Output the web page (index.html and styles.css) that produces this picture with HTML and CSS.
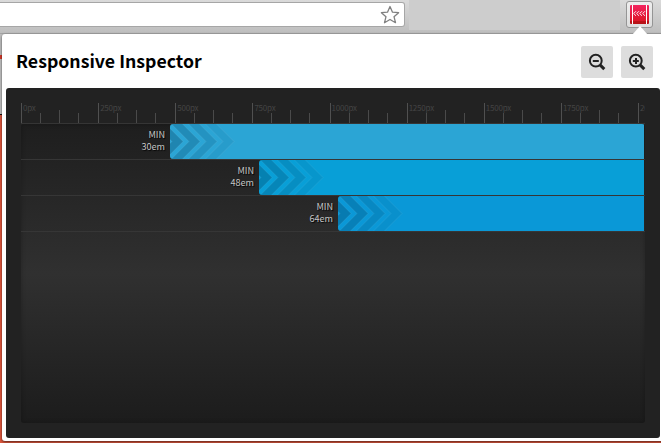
FILE: index.html
```html
<!DOCTYPE html>
<html lang="en">
<head>
<meta charset="utf-8">
<title>Responsive Inspector</title>
<link rel="stylesheet" href="styles.css">
</head>
<body>
<div class="page"></div>
<header class="toolbar">
  <div class="address">
    <svg width="20" height="20" viewBox="0 0 20 20"><path d="M10 1.500l2.500 5.700 6.100.5-4.600 4 1.500 6L10 14.500l-5.500 3.200 1.500-6L1.400 7.700l6.100-.5z" fill="#fff" stroke="#808080" stroke-width="1.300" stroke-linejoin="round"/></svg>
  </div>
  <div class="blank"></div>
  <div class="extension">
    <svg width="19" height="19" viewBox="0 0 19 19">
      <defs><linearGradient id="red" x2="0" y2="1"><stop offset="0" stop-color="#f3245f"/><stop offset=".85" stop-color="#dc1728"/><stop offset=".87" stop-color="#b91217"/></linearGradient></defs>
      <rect width="19" height="19" rx="1" fill="url(#red)"/>
      <path d="M2.500 0v19M16.500 0v19" stroke="#fff"/>
      <path d="M6 6.200l-2.300 2.300 2.300 2.300M9 6.200l-2.300 2.300 2.300 2.300M12 6.200l-2.300 2.300 2.300 2.300M15 6.200l-2.300 2.300 2.300 2.300" fill="none" stroke="#fff" stroke-width=".9"/>
    </svg>
  </div>
</header>
<main class="popup">
  <svg class="arrow" width="16" height="9" viewBox="0 0 16 9"><path d="M0 9L8 0l8 9z" fill="#fff"/></svg>
  <div class="heading">
    <h1>Responsive Inspector</h1>
    <button class="zoom"><svg width="18" height="18" viewBox="0 0 18 18" fill="none" stroke="#222"><circle cx="7.800" cy="7.700" r="5.900" stroke-width="2"/><path d="M4.800 8h6" stroke-width="2"/><path d="M12 11.900l4.300 4.200" stroke-width="3"/></svg></button>
    <button class="zoom"><svg width="18" height="18" viewBox="0 0 18 18" fill="none" stroke="#222"><circle cx="7.800" cy="7.700" r="5.900" stroke-width="2"/><path d="M4.800 8h6M8 5v6" stroke-width="2"/><path d="M12 11.900l4.300 4.200" stroke-width="3"/></svg></button>
  </div>
  <section class="inspector">
    <div class="ruler">
      <div class="unit"><span>0px</span><i></i><i class="half"></i><i></i></div>
      <div class="unit"><span>250px</span><i></i><i class="half"></i><i></i></div>
      <div class="unit"><span>500px</span><i></i><i class="half"></i><i></i></div>
      <div class="unit"><span>750px</span><i></i><i class="half"></i><i></i></div>
      <div class="unit"><span>1000px</span><i></i><i class="half"></i><i></i></div>
      <div class="unit"><span>1250px</span><i></i><i class="half"></i><i></i></div>
      <div class="unit"><span>1500px</span><i></i><i class="half"></i><i></i></div>
      <div class="unit"><span>1750px</span><i></i><i class="half"></i><i></i></div>
      <div class="unit"><span>2000px</span></div>
    </div>
    <div class="queries">
      <div class="row"><div class="label em30"><div>MIN</div><div>30em</div></div><div class="bar light"><svg width="66" height="35"><use href="#chevrons"/></svg></div></div>
      <div class="row"><div class="label em48"><div>MIN</div><div>48em</div></div><div class="bar mid"><svg width="66" height="35"><use href="#chevrons"/></svg></div></div>
      <div class="row"><div class="label em64"><div>MIN</div><div>64em</div></div><div class="bar deep"><svg width="66" height="35"><use href="#chevrons"/></svg></div></div>
    </div>
  </section>
</main>
<svg class="defs" width="0" height="0">
  <g id="chevrons" fill="#002b45" stroke="#fff" stroke-opacity=".1" stroke-width=".8">
    <path d="M-16.500 -1H-5.500L13 17.500L-5.500 36H-16.500L2 17.500z" fill-opacity=".26"/>
    <path d="M0.500 -1H11.500L30 17.500L11.500 36H0.500L19 17.500z" fill-opacity=".21"/>
    <path d="M17.500 -1H28.500L47 17.500L28.500 36H17.500L36 17.500z" fill-opacity=".14"/>
    <path d="M34.500 -1H45.500L64 17.500L45.500 36H34.500L53 17.500z" fill-opacity=".07"/>
  </g>
</svg>
</body>
</html>
```
FILE: styles.css
```css
* { box-sizing: border-box; }
body { margin: 0; height: 443px; position: relative; overflow: hidden; background: #c1c1c1; font-family: "Noto Sans CJK SC", "Noto Sans", sans-serif; }
.page { position: absolute; left: 0; top: 55px; width: 661px; height: 388px; background: linear-gradient(#d83a2a 0 4px, #c4c4c4 4px 59px, #111 59px 60px, #e2593f 60px); }
.toolbar { height: 34px; display: flex; align-items: flex-start; background: linear-gradient(#dadada, #bebebe); border-bottom: 1px solid #a5a5a5; }
.address { width: 405px; height: 25px; margin-top: 2px; display: flex; justify-content: flex-end; padding: 2px 4px 0 0; background: #fff; border: 1px solid #a6a6a6; border-left: 0; border-radius: 0 3px 3px 0; }
.blank { width: 211px; height: 30px; margin-left: 4px; background: #cdcdcd; }
.extension { width: 27px; height: 27px; margin: 1px 0 0 6px; padding: 3px; display: flex; background: linear-gradient(#eee, #ddd); border: 1px solid #959595; border-radius: 3px; }
.popup { position: relative; width: 661px; height: 407px; margin-left: 2px; padding: 12px 0 0 4px; background: #fff; border-radius: 3px 0 0 3px; box-shadow: 0 1px 3px rgba(0,0,0,.65); }
.arrow { position: absolute; left: 630px; top: -8px; }
.heading { display: flex; width: 647px; height: 42px; gap: 8px; padding-left: 10px; }
h1 { flex: 1; margin: 0; font-size: 17.7px; line-height: 29px; font-weight: 700; color: #000; }
.zoom { width: 32px; height: 32px; border: 0; border-radius: 2px; background: #ddd; padding: 0; display: flex; align-items: center; justify-content: center; }
.inspector { width: 654px; height: 350px; padding: 15px 15px 0; background: #222; border-radius: 3px; }
.ruler { height: 21px; width: 624px; display: flex; overflow: hidden; border-bottom: 1px solid #353535; }
.unit { flex: 0 0 77.125px; height: 20px; display: grid; grid-template-columns: repeat(3, 19px); align-items: end; border-left: 1px solid #505050; position: relative; }
.unit i { height: 10px; border-right: 1px solid #4a4a4a; }
.unit .half { height: 13px; }
.unit span { position: absolute; left: 1px; top: 0; font-size: 8px; line-height: 10px; letter-spacing: -.2px; color: #444; }
.queries { width: 624px; height: 299px; border-radius: 3px; overflow: hidden; background: linear-gradient(#1e1e1e, #303030 50%, #1c1c1c); box-shadow: inset 0 0 5px rgba(0,0,0,.25); }
.row { height: 36px; display: flex; padding-right: 1px; border-bottom: 1px solid #363636; }
.label { padding: 4px 5px 0 0; text-align: right; font-size: 9.1px; line-height: 12px; color: #c5c5c5; text-shadow: 1px 1px 1px #000; }
.label div { height: 12px; }
.em30 { width: 149px; }
.em48 { width: 238px; }
.em64 { width: 317px; }
.bar { flex: 1; overflow: hidden; border-radius: 3px 0 0 3px; }
.bar svg { display: block; }
.light { background: #2ba5d5; }
.mid { background: #089fd7; }
.deep { background: #0a98d7; }
.defs { position: absolute; }
```
